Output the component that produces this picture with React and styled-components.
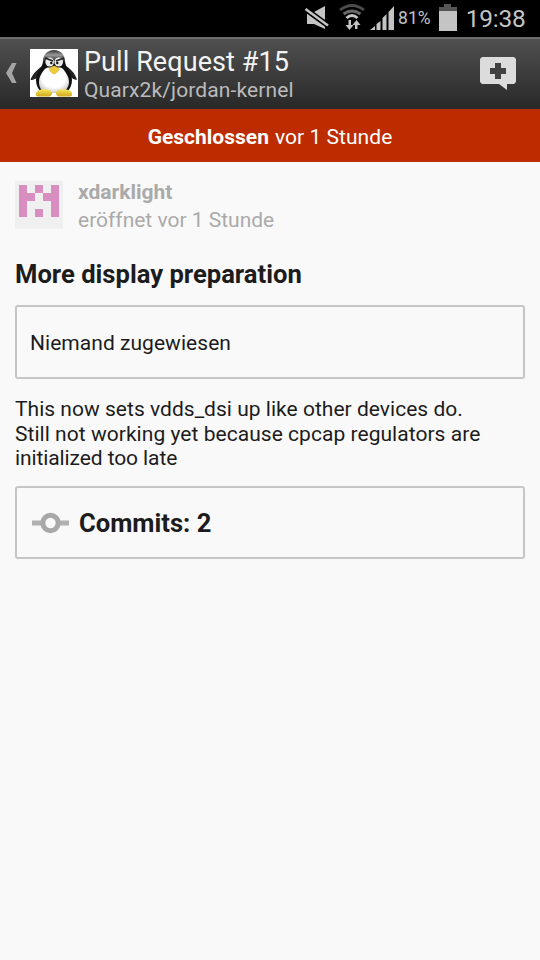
import styled, { createGlobalStyle } from 'styled-components'

const GlobalStyle = createGlobalStyle`
  * {
    box-sizing: border-box;
  }

  body {
    margin: 0;
    background: #f9f9f9;
    font-family: Roboto, sans-serif;
  }
`

const Screen = styled.div`
  display: flex;
  flex-direction: column;
  width: 540px;
  height: 960px;
  overflow: hidden;
  background: #f9f9f9;
  color: #1c1c1c;
`

const Text = styled.span`
  display: block;
  white-space: nowrap;
  font-size: ${({ $size }) => $size}px;
  line-height: ${({ $line }) => $line}px;
  font-weight: ${({ $bold }) => ($bold ? 700 : 400)};
  letter-spacing: ${({ $track }) => $track || 0}px;
  color: ${({ $color }) => $color || 'inherit'};
`

const StatusBar = styled.div`
  display: flex;
  align-items: center;
  height: 37px;
  padding-left: 304px;
  background: #000;
`

const StatusIcons = styled.svg`
  display: block;
  flex: none;
  width: 94px;
  height: 37px;
`

const BatteryIcon = styled.svg`
  display: block;
  flex: none;
  width: 20px;
  height: 37px;
  margin: 0 8px 0 7px;
`

const ActionBar = styled.header`
  display: flex;
  align-items: center;
  height: 72px;
  padding: 0 24px 2px 6px;
  border-top: 2px solid #6c6c6c;
  background: linear-gradient(#505050, #282828);
`

const BackIcon = styled.svg`
  width: 12px;
  height: 24px;
  margin-right: 12px;
`

const Avatar = styled.svg`
  display: block;
  flex: none;
  width: 48px;
  height: 48px;
`

const Heading = styled.div`
  flex: 1;
  padding: 4px 0 0 6px;
`

const CommentIcon = styled.svg`
  width: 36px;
  height: 36px;
  margin-top: 2px;
`

const Banner = styled.div`
  display: flex;
  justify-content: center;
  align-items: center;
  gap: 6px;
  height: 53px;
  padding-top: 3px;
  background: #bd2c00;
  color: #fff;
`

const Content = styled.main`
  padding: 19px 15px 0;
`

const Author = styled.div`
  display: flex;
  gap: 15px;
  height: 48px;
`

const Title = styled.div`
  margin-top: 28px;
`

const Box = styled.div`
  display: flex;
  align-items: center;
  height: ${({ $height }) => $height}px;
  margin-top: ${({ $gap }) => $gap}px;
  padding: 2px 13px 0;
  border: 2px solid #c6c6c6;
  border-radius: 3px;
`

const Description = styled.div`
  margin-top: 18px;
`

const CommitIcon = styled.svg`
  width: 38px;
  height: 24px;
  margin: 0 10px 0 1px;
`

const Tux = () => (
  <Avatar viewBox="0 0 48 48">
    <defs>
      <linearGradient id="feet" x1="0" y1="0" x2="0" y2="1">
        <stop offset="0" stopColor="#f7e65c" />
        <stop offset="1" stopColor="#d0a51c" />
      </linearGradient>
      <radialGradient id="belly" cx=".5" cy=".4" r=".65">
        <stop offset=".6" stopColor="#fff" />
        <stop offset="1" stopColor="#bcbcbc" />
      </radialGradient>
      <linearGradient id="head" x1="0" y1="0" x2="0" y2="1">
        <stop offset="0" stopColor="#333" />
        <stop offset=".12" stopColor="#999" />
        <stop offset=".3" stopColor="#111" />
      </linearGradient>
    </defs>
    <path fill="#fff" d="M0 0h48v48H0z" />
    <path fill="#222" d="M14 16C9 19 3 24 .5 30.500c1 1.500 5-.5 8-2.500zM34 16c6 3 11 8 13 14.500-1 1-5-1-8-3.500z" />
    <path fill="url(#head)" d="M24 1c-7 0-11 5-11 11 0 6-7 11-7 19 0 5 2 9 5 12h26c3-3 5-7 5-12 0-8-7-13-7-19C35 6 31 1 24 1z" />
    <path fill="url(#belly)" d="M24 19c-3 0-7-2-10 2-3 4-5 7-5 12 0 6 3 9 6 11h17c3-2 7-5 7-11 0-5-2.500-8-5-12-3-4-7-2-10-2z" />
    <ellipse cx="19.700" cy="13" rx="4.300" ry="4.500" fill="#e8e8e8" />
    <ellipse cx="28.700" cy="13" rx="4.300" ry="4.500" fill="#e8e8e8" />
    <path stroke="#222" strokeWidth="1.800" d="m15 9 8 3M34 9l-8 3" />
    <circle cx="21.300" cy="14" r="1.200" fill="#111" />
    <circle cx="27.300" cy="14" r="1.200" fill="#111" />
    <path fill="#f0cb3c" stroke="#c39b2a" strokeWidth=".4" d="M24 17c-2 0-4.500 2-5 3.500 1 1.500 3.500 4.500 5 4.500s4.500-3 5.500-4.500c-1-1.500-3.500-3.500-5.500-3.500z" />
    <path fill="url(#feet)" d="M9 41c4-1 10-1 12 1 2 2 1 5-2 5.500H8c-3-.5-3-4 1-6.500zM39 41c-4-1-10-1-12 1-2 2-1 5 2 5.500h11c3-.5 3-4-1-6.500z" />
  </Avatar>
)

const Identicon = () => (
  <Avatar viewBox="0 0 48 48" shapeRendering="crispEdges">
    <path fill="#f0f0f0" d="M0 0h48v48H0z" />
    <path
      fill="#d88fc0"
      d="M4 4h8v8h8v8h-8v16H4zM20 4h8v8h-8zM36 4h8v32h-8V20h-8v-8h8zM20 28h8v8h-8z"
    />
  </Avatar>
)

const App = () => {
  return (
    <>
      <GlobalStyle />
      <Screen>
        <StatusBar>
          <StatusIcons viewBox="304 0 94 37">
            <path fill="#c4c4c4" d="M307 12h7l11-6v23l-11-5h-7z" />
            <path stroke="#000" strokeWidth="5.500" d="m304 8 26 19" />
            <path stroke="#c4c4c4" strokeWidth="2.500" d="m305.500 9 22.500 16.500" />
            <g fill="none" strokeWidth="2.800">
              <path stroke="#4c4c4c" d="M340 10q12-9 24 0" />
              <path stroke="#6a6a6a" d="M343.500 14q8.500-6 17 0" />
              <path stroke="#c4c4c4" d="M346.500 18q5.500-5 11 0" />
            </g>
            <path fill="#c4c4c4" d="M348.500 20h2.500v5h2.500l-4 5-4-5h3zM355 29v-4h-2.500l4-5 4 5h-3v4z" />
            <path fill="#c4c4c4" d="M370 30l5-4v4zM376.500 30v-6l4-3v9zM382.500 30V18l4-4v16zM388.500 30V12l5.500-6v24z" />
          </StatusIcons>
          <Text $size={17.5} $line={37} $track={0.1} $color="#c4c4c4">81%</Text>
          <BatteryIcon viewBox="0 0 20 37">
            <path fill="#555" d="M6 4h7v3h6v4H1V7h5z" />
            <path fill="#c4c4c4" d="M1 11h18v20H1z" />
          </BatteryIcon>
          <Text $size={24.5} $line={37} $track={-0.25} $color="#c4c4c4">19:38</Text>
        </StatusBar>

        <ActionBar>
          <BackIcon viewBox="0 0 12 24">
            <path fill="#a5a5a5" d="M6 2h4.500L6 12l4.500 10H6L0 12z" />
          </BackIcon>
          <Tux />
          <Heading>
            <Text $size={27} $line={30} $track={0.08} $color="#f3f3f3">Pull Request #15</Text>
            <Text $size={21} $line={26} $track={0.12} $color="#bbb">Quarx2k/jordan-kernel</Text>
          </Heading>
          <CommentIcon viewBox="0 0 36 36">
            <path fill="#dcdcdc" d="M2 1h32l2 2v23l-2 2h-7v6l-8-6H2l-2-2V3z" />
            <path fill="#414141" d="M15 7h6v5h5v6h-5v5h-6v-5h-5v-6h5z" />
          </CommentIcon>
        </ActionBar>

        <Banner>
          <Text $size={21} $line={25} $bold>Geschlossen</Text>
          <Text $size={21} $line={25} $track={0.05}>vor 1 Stunde</Text>
        </Banner>

        <Content>
          <Author>
            <Identicon />
            <div>
              <Text $size={21} $line={22} $color="#aaa" $bold>xdarklight</Text>
              <Text $size={21} $line={35} $color="#aaa">eröffnet vor 1 Stunde</Text>
            </div>
          </Author>
          <Title>
            <Text $size={25.6} $line={34} $bold>More display preparation</Text>
          </Title>
          <Box $height={74} $gap={14}>
            <Text $size={21} $line={25} $track={0.04}>Niemand zugewiesen</Text>
          </Box>
          <Description>
            <Text $size={21} $line={24.5} $track={0.02}>This now sets vdds_dsi up like other devices do.</Text>
            <Text $size={21} $line={24.5} $track={0.04}>Still not working yet because cpcap regulators are</Text>
            <Text $size={21} $line={24.5} $track={-0.1}>initialized too late</Text>
          </Description>
          <Box $height={73} $gap={15}>
            <CommitIcon viewBox="0 0 38 24">
              <path stroke="#b0b0b0" strokeWidth="5" d="M1 12h10M28 12h10" />
              <circle cx="19.500" cy="12" r="7.700" fill="none" stroke="#a8a8a8" strokeWidth="5" />
            </CommitIcon>
            <Text $size={25.6} $line={32} $bold>Commits: 2</Text>
          </Box>
        </Content>
      </Screen>
    </>
  )
}

export default App
